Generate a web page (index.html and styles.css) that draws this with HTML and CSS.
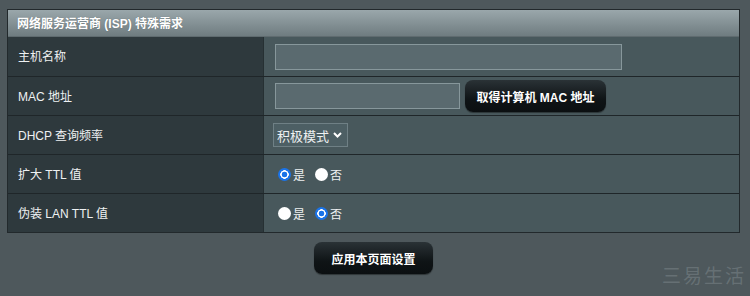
FILE: index.html
```html
<!DOCTYPE html>
<html lang="zh-CN">
<head>
<meta charset="utf-8">
<title>ISP</title>
<link rel="stylesheet" href="styles.css">
</head>
<body>
<div class="page">
  <div class="panel">
    <div class="panel-head">网络服务运营商 (ISP) 特殊需求</div>
    <div class="row">
      <div class="label">主机名称</div>
      <div class="field"><input class="text wide" type="text"></div>
    </div>
    <div class="row">
      <div class="label">MAC 地址</div>
      <div class="field"><input class="text narrow" type="text"><button class="btn mac">取得计算机 MAC 地址</button></div>
    </div>
    <div class="row">
      <div class="label">DHCP 查询频率</div>
      <div class="field">
        <span class="select"><select><option>积极模式</option></select><svg class="chev" width="9" height="6" viewBox="0 0 9 6"><path d="M1 1l3.5 3.5L8 1" fill="none" stroke="#fff" stroke-width="2"/></svg></span>
      </div>
    </div>
    <div class="row">
      <div class="label">扩大 TTL 值</div>
      <div class="field radios">
        <label><input type="radio" name="ttl" checked>是</label>
        <label><input type="radio" name="ttl">否</label>
      </div>
    </div>
    <div class="row">
      <div class="label">伪装 LAN TTL 值</div>
      <div class="field radios">
        <label><input type="radio" name="lan">是</label>
        <label><input type="radio" name="lan" checked>否</label>
      </div>
    </div>
  </div>
  <div class="actions"><button class="btn apply">应用本页面设置</button></div>
  <div class="watermark">三易生活</div>
</div>
</body>
</html>
```
FILE: styles.css
```css
html, body {
  margin: 0;
  padding: 0;
}
body {
  background: #4e585c;
  width: 750px;
  height: 296px;
  overflow: hidden;
  font-family: "Liberation Sans", "Noto Sans CJK SC", sans-serif;
  font-size: 12px;
  color: #eef1f2;
}
.page {
  position: relative;
  padding: 9px 10px 0 7px;
  height: 296px;
  box-sizing: border-box;
}
.panel {
  width: 733px;
  box-sizing: border-box;
  border: 1px solid #22292c;
  background: #242c2f;
}
.panel-head {
  height: 27px;
  box-sizing: border-box;
  padding: 0 0 1px 9px;
  display: flex;
  align-items: center;
  font-weight: bold;
  color: #fff;
  background: linear-gradient(#9aa7ab, #6f7c80);
  border-bottom: 1px solid #5f6b6f;
  text-shadow: 0 0 1px rgba(0,0,0,0.3);
}
.row {
  display: grid;
  grid-template-columns: 256px 1fr;
  height: 39px;
  box-sizing: border-box;
  border-top: 1px solid #1f2629;
}
.panel-head + .row { border-top: none; height: 39px; }
.label {
  background: #2e393d;
  display: flex;
  align-items: center;
  padding: 0 0 2px 10px;
  border-right: 1px solid #263033;
}
.field {
  background: #48585c;
  display: flex;
  align-items: center;
  padding-left: 11px;
}
.text {
  height: 26px;
  box-sizing: border-box;
  background: #5a6a6f;
  border: 1px solid #87979b;
  outline: none;
  margin: 0;
  color: #fff;
}
.wide { width: 347px; }
.narrow { width: 185px; }
.btn {
  font-family: "Liberation Sans", "Noto Sans CJK SC", sans-serif;
  font-size: 12px;
  font-weight: bold;
  color: #fff;
  border: none;
  border-radius: 8px;
  background: linear-gradient(#2a3236, #0f1416 60%, #0b0f11);
  box-shadow: 0 1px 1px rgba(0,0,0,0.4);
  height: 32px;
  padding: 0;
  cursor: pointer;
}
.mac {
  width: 141px;
  margin-left: 5px;
}
.select {
  display: inline-flex;
  align-items: center;
  height: 24px;
  box-sizing: border-box;
  width: 75px;
  margin-left: -2px;
  border: 1px solid #6f8085;
  background: #4d5f64;
  padding: 0 5px 0 3px;
}
.select select {
  appearance: none;
  -webkit-appearance: none;
  border: none;
  background: transparent;
  color: #eef1f2;
  font-family: "Noto Sans CJK SC", sans-serif;
  font-size: 13px;
  padding: 0;
  margin: 0;
  outline: none;
}
.chev { margin-left: 3px; }
.radios label {
  display: inline-flex;
  align-items: center;
  margin-right: 7px;
  font-family: "Noto Sans CJK SC", sans-serif;
  font-size: 12px;
}
.radios input {
  appearance: none;
  -webkit-appearance: none;
  width: 13px;
  height: 13px;
  margin: 0 2px 0 3px;
  border-radius: 50%;
  background: #fff;
}
.radios input:checked {
  background: radial-gradient(circle, #1a73e8 0 2.6px, #fff 3.1px 4px, #1a73e8 4.5px);
}
.actions {
  display: flex;
  justify-content: center;
  width: 733px;
  padding-top: 9px;
}
.apply { width: 119px; }
.watermark {
  position: absolute;
  right: 4px;
  bottom: 8px;
  font-family: "Noto Sans CJK SC", sans-serif;
  font-size: 19px;
  letter-spacing: 2px;
  color: rgba(150,160,164,0.35);
}
```
